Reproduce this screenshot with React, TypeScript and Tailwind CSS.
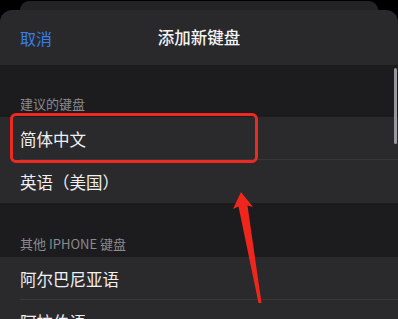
import React from "react";

const font = { fontFamily: '"Noto Sans CJK SC", "Noto Sans", sans-serif' };

function SectionHeader({ title, height }: { title: string; height: string }) {
    return (
        <div className={`flex items-end bg-[#1c1c1e] px-[20px] pb-[5px] ${height}`}>
            <span className="text-[13px] leading-[16px] text-[#8a8a8f]">{title}</span>
        </div>
    );
}

function Row({ label, divider }: { label: string; divider?: boolean }) {
    return (
        <div className="relative flex h-[43px] items-center bg-[#2a2a2c] px-[20px]">
            <span className="text-[16.5px] leading-[20px] text-[#f0f0f2]">{label}</span>
            {divider && <div className="absolute bottom-0 left-[20px] right-0 h-px bg-[#38383a]"></div>}
        </div>
    );
}

export default function App() {
    return (
        <div className="relative h-[319px] w-[398px] overflow-hidden bg-black" style={font}>
            {/* card stacked behind */}
            <div className="mx-[20px] mt-[1px] h-[9px] rounded-t-[10px] bg-[#232325]"></div>

            {/* front sheet */}
            <div className="rounded-t-[12px] bg-[#29292b]">
                <div className="grid h-[55px] grid-cols-[1fr_auto_1fr] items-center px-[20px]">
                    <span className="text-[16px] text-[#3a7ee8]">取消</span>
                    <span className="text-[16.5px] font-medium text-[#f4f4f6]">添加新键盘</span>
                    <span></span>
                </div>

                <SectionHeader title="建议的键盘" height="h-[52px]" />
                <Row label="简体中文" divider />
                <Row label="英语（美国）" />

                <SectionHeader title="其他 IPHONE 键盘" height="h-[54px]" />
                <Row label="阿尔巴尼亚语" divider />
                <Row label="阿拉伯语" />
            </div>

            {/* scroll indicator */}
            <div className="absolute right-[1px] top-[68px] h-[76px] w-[3px] rounded-full bg-[#9a9a9e]"></div>

            {/* red highlight box */}
            <div className="absolute left-[10px] top-[113px] h-[50px] w-[248px] rounded-[6px] border-[3px] border-[#ec2a22]"></div>

            {/* red arrow */}
            <svg className="absolute left-0 top-0" width="398" height="319" viewBox="0 0 398 319">
                <polygon
                    points="241,192 233,209 238.5,206.5 258.5,303 261.5,303 247.5,205.5 253,207"
                    fill="#f0261c"
                />
            </svg>
        </div>
    );
}
